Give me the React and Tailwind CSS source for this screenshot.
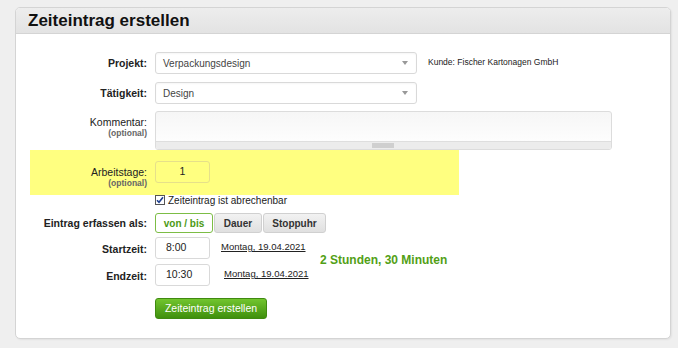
import React from "react";

function Label({ children, sub, w = "w-[131px]", bold = true, pt = "pt-0" }) {
  return (
    <div className={`${w} shrink-0 text-right mr-[8px] ${pt}`}>
      <div className={`${bold ? "font-bold text-[10.5px]" : "text-[10.5px]"} text-[#222] leading-[12px]`}>{children}</div>
      {sub && <div className="text-[8.5px] font-bold text-[#666] leading-[10px]">{sub}</div>}
    </div>
  );
}

function Select({ value }) {
  return (
    <div className="w-[262px] h-[22px] border border-[#d9d9d9] rounded-[3px] bg-white flex items-center pl-[7px] pr-[8px] shadow-[inset_0_1px_2px_rgba(0,0,0,0.04)]">
      <span className="text-[10px] text-[#444] flex-1">{value}</span>
      <span className="w-0 h-0 border-l-[3px] border-r-[3px] border-t-[4px] border-l-transparent border-r-transparent border-t-[#999]" />
    </div>
  );
}

function TextInput({ value, center = false }) {
  return (
    <div className={`w-[55px] h-[22px] border border-[#d9d9d9] rounded-[3px] bg-white flex items-center ${center ? "justify-center" : "pl-[10px]"} text-[10.5px] text-[#222]`}>
      {value}
    </div>
  );
}

export default function App() {
  return (
    <div className="w-[678px] h-[348px] bg-[#efefef] pt-[7px] pl-[15px] font-['Liberation_Sans',Arial,sans-serif]">
      <div className="w-[656px] h-[332px] bg-white border border-[#d4d4d4] rounded-[5px] overflow-hidden shadow-[1px_1px_2px_rgba(0,0,0,0.06)]">
        <div className="h-[26px] bg-gradient-to-b from-[#ededed] to-[#e3e3e3] border-b border-[#d4d4d4] pl-[12px] flex items-center">
          <h1 className="text-[17px] font-bold text-[#111] leading-none">Zeiteintrag erstellen</h1>
        </div>

        <div className="flex flex-col">
          <div className="flex items-center mt-[18px]">
            <Label>Projekt:</Label>
            <Select value="Verpackungsdesign" />
            <span className="ml-[11px] self-start mt-[4px] text-[8.5px] text-[#222]">Kunde: Fischer Kartonagen GmbH</span>
          </div>

          <div className="flex items-center mt-[8px]">
            <Label>Tätigkeit:</Label>
            <Select value="Design" />
          </div>

          <div className="flex items-start mt-[7px]">
            <Label bold={false} sub="(optional)" pt="pt-[5px]">Kommentar:</Label>
            <div className="w-[457px] h-[39px] border border-[#dcdcdc] rounded-[3px] bg-gradient-to-b from-[#f6f6f6] to-white flex flex-col overflow-hidden">
              <div className="flex-1" />
              <div className="h-[8px] bg-[#ececec] border-t border-[#dedede] relative">
                <div className="absolute left-[216px] top-[1px] w-[22px] h-[5px] bg-[#cfcfcf]" />
              </div>
            </div>
          </div>

          <div className="ml-[14px] w-[429px] h-[45px] bg-[#ffff80] flex items-start pt-[11px]">
            <Label bold={false} sub="(optional)" w="w-[117px]" pt="pt-[5px]">Arbeitstage:</Label>
            <div className="w-[55px] h-[22px] border border-[#e6e08a] rounded-[3px] bg-[#ffff80] flex items-center justify-center text-[10.5px] text-[#222]">1</div>
          </div>

          <div className="flex items-center ml-[139px] mt-[-1px] h-[12px]">
            <span className="w-[10px] h-[10px] border border-[#555] bg-white flex items-center justify-center">
              <svg width="8" height="8" viewBox="0 0 8 8">
                <path d="M1 4.2 L3 6.3 L7 1.2" fill="none" stroke="#1f3f8f" strokeWidth="1.6" />
              </svg>
            </span>
            <span className="ml-[3px] text-[10px] text-[#222]">Zeiteintrag ist abrechenbar</span>
          </div>

          <div className="flex items-center mt-[7px]">
            <Label>Eintrag erfassen als:</Label>
            <div className="flex gap-[1px]">
              <div className="w-[58px] h-[20px] border border-[#7cbd45] rounded-[3px] bg-white flex items-center justify-center text-[10px] font-bold text-[#4d9a14]">von / bis</div>
              <div className="w-[48px] h-[20px] border border-[#d0d0d0] rounded-[3px] bg-gradient-to-b from-[#f2f2f2] to-[#e0e0e0] flex items-center justify-center text-[10px] font-bold text-[#333]">Dauer</div>
              <div className="w-[63px] h-[20px] border border-[#d0d0d0] rounded-[3px] bg-gradient-to-b from-[#f2f2f2] to-[#e0e0e0] flex items-center justify-center text-[10px] font-bold text-[#333]">Stoppuhr</div>
            </div>
          </div>

          <div className="flex items-center mt-[4px]">
            <div className="w-[304px] flex flex-col gap-[5px]">
              <div className="flex items-start">
                <Label pt="pt-[6px]">Startzeit:</Label>
                <TextInput value="8:00" />
                <span className="ml-[11px] mt-[3px] text-[9.5px] text-[#222] underline">Montag, 19.04.2021</span>
              </div>
              <div className="flex items-start">
                <Label pt="pt-[6px]">Endzeit:</Label>
                <TextInput value="10:30" />
                <span className="ml-[14px] mt-[3px] text-[9.5px] text-[#222] underline">Montag, 19.04.2021</span>
              </div>
            </div>
            <span className="mb-[4px] text-[12px] font-bold text-[#52a016]">2 Stunden, 30 Minuten</span>
          </div>

          <div className="ml-[139px] mt-[12px]">
            <div className="w-[112px] h-[21px] border border-[#3f8a10] rounded-[3px] bg-gradient-to-b from-[#72c52e] to-[#3f900c] flex items-center justify-center text-[10.5px] text-white">
              Zeiteintrag erstellen
            </div>
          </div>
        </div>
      </div>
    </div>
  );
}
